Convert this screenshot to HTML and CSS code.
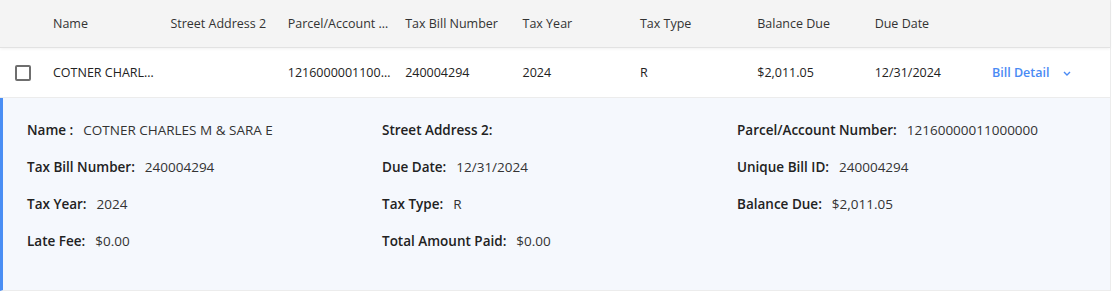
FILE: index.html
```html
<!DOCTYPE html>
<html>
<head>
<meta charset="utf-8">
<link rel="stylesheet" href="styles.css">
</head>
<body>
<div class="table">
  <div class="row head">
    <div class="cell"></div>
    <div class="cell">Name</div>
    <div class="cell">Street Address 2</div>
    <div class="cell">Parcel/Account Number</div>
    <div class="cell">Tax Bill Number</div>
    <div class="cell">Tax Year</div>
    <div class="cell">Tax Type</div>
    <div class="cell">Balance Due</div>
    <div class="cell">Due Date</div>
    <div class="cell"></div>
  </div>
  <div class="row body">
    <div class="cell check-cell"><span class="checkbox"></span></div>
    <div class="cell">COTNER CHARLES M &amp; SARA E</div>
    <div class="cell"></div>
    <div class="cell">12160000011000000</div>
    <div class="cell">240004294</div>
    <div class="cell">2024</div>
    <div class="cell">R</div>
    <div class="cell">$2,011.05</div>
    <div class="cell">12/31/2024</div>
    <div class="cell action">
      <span class="link">Bill Detail</span>
      <svg class="chev" width="8" height="5" viewBox="0 0 8 5"><path d="M1 1 L4 4 L7 1" fill="none" stroke="#4a8af4" stroke-width="1.4"/></svg>
    </div>
  </div>
  <div class="detail">
    <div class="item"><span class="label">Name :</span><span class="value">COTNER CHARLES M &amp; SARA E</span></div>
    <div class="item"><span class="label">Street Address 2:</span><span class="value"></span></div>
    <div class="item"><span class="label">Parcel/Account Number:</span><span class="value">12160000011000000</span></div>
    <div class="item"><span class="label">Tax Bill Number:</span><span class="value">240004294</span></div>
    <div class="item"><span class="label">Due Date:</span><span class="value">12/31/2024</span></div>
    <div class="item"><span class="label">Unique Bill ID:</span><span class="value">240004294</span></div>
    <div class="item"><span class="label">Tax Year:</span><span class="value">2024</span></div>
    <div class="item"><span class="label">Tax Type:</span><span class="value">R</span></div>
    <div class="item"><span class="label">Balance Due:</span><span class="value">$2,011.05</span></div>
    <div class="item"><span class="label">Late Fee:</span><span class="value">$0.00</span></div>
    <div class="item"><span class="label">Total Amount Paid:</span><span class="value">$0.00</span></div>
  </div>
</div>
</body>
</html>
```
FILE: styles.css
```css
* { box-sizing: border-box; }
html, body { margin: 0; padding: 0; background: #fff; }
body {
  font-family: "Open Sans", "Noto Sans", sans-serif;
  font-size: 12.5px;
  color: #222;
}
.table {
  width: 1111px;
  border-right: 1px solid #ececec;
}
.row {
  display: grid;
  grid-template-columns: 45px repeat(8, 117.375px) 1fr;
  align-items: center;
}
.cell {
  padding: 0 5px 0 8px;
  white-space: nowrap;
  overflow: hidden;
  text-overflow: ellipsis;
}
.head {
  height: 48px;
  background: #f4f4f4;
  color: #333;
  border-bottom: 1px solid #e2e2e2;
  box-shadow: 0 1px 3px rgba(0,0,0,0.06);
  position: relative;
}
.body {
  height: 50px;
  background: #fff;
  border-bottom: 1px solid #ececec;
}
.check-cell { padding: 0 0 0 15px; display: flex; align-items: center; }
.checkbox {
  width: 16px;
  height: 16px;
  border: 2px solid #6e6e6e;
  border-radius: 2px;
  display: block;
}
.action { display: flex; align-items: center; gap: 14px; }
.link { color: #4a8af4; font-weight: 600; }
.chev { display: block; margin-top: 1px; }
.detail {
  background: #f5f8fd;
  border-left: 3px solid #4a8ef4;
  border-bottom: 1px solid #ececec;
  padding: 13px 0 31px 24px;
  display: grid;
  grid-template-columns: repeat(3, 355px);
  grid-auto-rows: 37px;
  align-items: center;
  font-size: 13.5px;
}
.item { display: flex; align-items: center; white-space: nowrap; }
.label { font-weight: 600; color: #222; margin-right: 10px; }
.value { color: #333; }
```
